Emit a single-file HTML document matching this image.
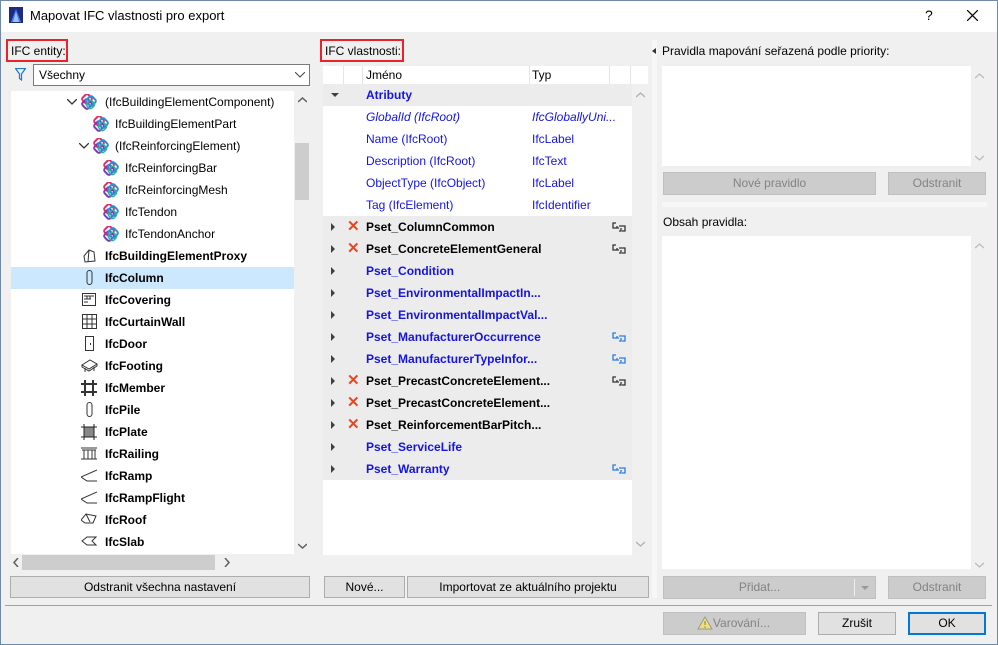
<!DOCTYPE html>
<html><head><meta charset="utf-8">
<style>
*{box-sizing:border-box;margin:0;padding:0}
body{width:998px;height:645px;overflow:hidden;background:#f0f0f0;font-family:"Liberation Sans",sans-serif;font-size:12px;color:#000;position:relative}
.a{position:absolute}
.win{position:absolute;left:0;top:0;width:998px;height:645px;border:1px solid #6f8aa6}
.t{position:absolute;white-space:nowrap;line-height:14px}
.btn{position:absolute;background:#e1e1e1;border:1px solid #adadad;text-align:center;line-height:20px;font-size:12px}
.dis{background:#cccccc;border-color:#bfbfbf;color:#838383}
.b{font-weight:bold}
.blue{color:#1414e6}
.row{position:absolute;left:0;width:100%;height:22px}
.tri{position:absolute;width:0;height:0;border-top:4px solid transparent;border-bottom:4px solid transparent;border-left:4px solid #404040}
.x{position:absolute;color:#e8481d;font-size:15px;font-weight:bold;line-height:14px}
.arr{position:absolute;color:#9a9a9a;font-size:10px}
</style></head><body>
<div class="win"></div>
<!-- title bar -->
<div class="a" style="left:1px;top:1px;width:996px;height:31px;background:#fff"></div>
<svg class="a" style="left:9px;top:7px" width="14" height="16"><rect x="0" y="0" width="14" height="16" fill="#1c2a80"/><path d="M2 15 L7 2 L12 15 Z" fill="#4a7cf0"/><path d="M4 15 L7 5 L10 15Z" fill="#9bc0ff"/></svg>
<div class="t" style="left:30px;top:9px;font-size:13px">Mapovat IFC vlastnosti pro export</div>
<div class="t" style="left:925px;top:8px;font-size:14px">?</div>
<svg class="a" style="left:967px;top:10px" width="11" height="11"><path d="M0 0L11 11M11 0L0 11" stroke="#000" stroke-width="1.2"/></svg>

<!-- LEFT -->
<div class="a" style="left:6px;top:39px;width:62px;height:23px;border:2px solid #e8242a"></div>
<div class="t" style="left:11px;top:44px">IFC entity:</div>
<svg class="a" style="left:15px;top:68px" width="11" height="13"><path d="M0.5 0.5H10.5L6.5 6V12L4.5 10.5V6Z" fill="none" stroke="#1a78d8" stroke-width="1.2"/></svg>
<div class="a" style="left:33px;top:64px;width:277px;height:22px;background:#fff;border:1px solid #7a7a7a"></div>
<div class="t" style="left:39px;top:68px">Všechny</div>
<svg class="a" style="left:295px;top:72px" width="10" height="6"><path d="M0 0L5 5L10 0" fill="none" stroke="#444"/></svg>

<div class="a" style="left:11px;top:91px;width:283px;height:463px;background:#fff;overflow:hidden">
<svg width="0" height="0" style="position:absolute"><defs><g id="ifc"><rect x="3" y="1" width="8" height="8" rx="2" transform="rotate(45 7 5)" fill="none" stroke="#e0306a" stroke-width="2"/><rect x="3" y="6" width="8" height="8" rx="2" transform="rotate(45 7 10)" fill="none" stroke="#7a3bbf" stroke-width="2"/><rect x="7" y="3" width="8" height="8" rx="2" transform="rotate(45 11 7)" fill="none" stroke="#2a8fd8" stroke-width="2"/><rect x="7" y="7" width="7" height="7" rx="2" transform="rotate(45 10.5 10.5)" fill="none" stroke="#30b0a0" stroke-width="1.5"/></g></defs></svg>
<div class="row" style="top:0"><svg class="a" style="left:56px;top:8px" width="10" height="6"><path d="M0 0L5 5L10 0" fill="none" stroke="#333" stroke-width="1.3"/></svg><svg class="a" style="left:69px;top:3px" width="17" height="17"><use href="#ifc"/></svg><span class="t" style="left:94px;top:4px">(IfcBuildingElementComponent)</span></div>
<div class="row" style="top:22px"><svg class="a" style="left:81px;top:3px" width="17" height="17"><use href="#ifc"/></svg><span class="t" style="left:104px;top:4px">IfcBuildingElementPart</span></div>
<div class="row" style="top:44px"><svg class="a" style="left:68px;top:8px" width="10" height="6"><path d="M0 0L5 5L10 0" fill="none" stroke="#333" stroke-width="1.3"/></svg><svg class="a" style="left:81px;top:3px" width="17" height="17"><use href="#ifc"/></svg><span class="t" style="left:104px;top:4px">(IfcReinforcingElement)</span></div>
<div class="row" style="top:66px"><svg class="a" style="left:91px;top:3px" width="17" height="17"><use href="#ifc"/></svg><span class="t" style="left:114px;top:4px">IfcReinforcingBar</span></div>
<div class="row" style="top:88px"><svg class="a" style="left:91px;top:3px" width="17" height="17"><use href="#ifc"/></svg><span class="t" style="left:114px;top:4px">IfcReinforcingMesh</span></div>
<div class="row" style="top:110px"><svg class="a" style="left:91px;top:3px" width="17" height="17"><use href="#ifc"/></svg><span class="t" style="left:114px;top:4px">IfcTendon</span></div>
<div class="row" style="top:132px"><svg class="a" style="left:91px;top:3px" width="17" height="17"><use href="#ifc"/></svg><span class="t" style="left:114px;top:4px">IfcTendonAnchor</span></div>
<div class="row b" style="top:154px"><svg class="a" style="left:72px;top:4px" width="14" height="14"><path d="M2 13L1 7L6 1L11 3L12 12Z M6 1L5 13" fill="none" stroke="#333"/></svg><span class="t" style="left:94px;top:4px">IfcBuildingElementProxy</span></div>
<div class="row b" style="top:176px;background:#cce8ff"><svg class="a" style="left:75px;top:3px" width="8" height="16"><rect x="1" y="0.5" width="5" height="14" rx="2.5" fill="none" stroke="#333"/></svg><span class="t" style="left:94px;top:4px">IfcColumn</span></div>
<div class="row b" style="top:198px"><svg class="a" style="left:71px;top:4px" width="15" height="14"><rect x="0.5" y="0.5" width="13" height="12" fill="none" stroke="#333"/><path d="M2 3H12M2 6H9M2 9H6M5 3V6M8 3V6" stroke="#333"/></svg><span class="t" style="left:94px;top:4px">IfcCovering</span></div>
<div class="row b" style="top:220px"><svg class="a" style="left:71px;top:3px" width="15" height="15"><rect x="0.5" y="0.5" width="14" height="14" fill="none" stroke="#333"/><path d="M5 0V15M10 0V15M0 5H15M0 10H15" stroke="#333"/></svg><span class="t" style="left:94px;top:4px">IfcCurtainWall</span></div>
<div class="row b" style="top:242px"><svg class="a" style="left:74px;top:3px" width="9" height="16"><rect x="0.5" y="0.5" width="8" height="14" fill="none" stroke="#333"/><rect x="5" y="7" width="1" height="2" fill="#333"/></svg><span class="t" style="left:94px;top:4px">IfcDoor</span></div>
<div class="row b" style="top:264px"><svg class="a" style="left:70px;top:4px" width="17" height="14"><path d="M1 6L9 1L16 5L8 10Z M1 6V8L8 12L16 7V5 M4 9V13 M13 8V12" fill="none" stroke="#333"/></svg><span class="t" style="left:94px;top:4px">IfcFooting</span></div>
<div class="row b" style="top:286px"><svg class="a" style="left:70px;top:3px" width="16" height="16"><path d="M4 0V16M12 0V16M0 4H16M0 12H16" stroke="#333" stroke-width="2"/></svg><span class="t" style="left:94px;top:4px">IfcMember</span></div>
<div class="row b" style="top:308px"><svg class="a" style="left:75px;top:3px" width="8" height="16"><rect x="1" y="0.5" width="5" height="14" rx="2.5" fill="none" stroke="#333"/></svg><span class="t" style="left:94px;top:4px">IfcPile</span></div>
<div class="row b" style="top:330px"><svg class="a" style="left:70px;top:3px" width="16" height="16"><rect x="3" y="3" width="10" height="10" fill="#888" stroke="#222"/><path d="M3 0V16M13 0V16M0 3H16M0 13H16" stroke="#222"/></svg><span class="t" style="left:94px;top:4px">IfcPlate</span></div>
<div class="row b" style="top:352px"><svg class="a" style="left:70px;top:4px" width="16" height="13"><path d="M0 1H16M1 3H15M3 3V12M7 3V12M11 3V12M14 3V12M0 12H16" stroke="#333"/></svg><span class="t" style="left:94px;top:4px">IfcRailing</span></div>
<div class="row b" style="top:374px"><svg class="a" style="left:70px;top:4px" width="16" height="13"><path d="M16 1L0 8L6 12H16" fill="none" stroke="#333"/></svg><span class="t" style="left:94px;top:4px">IfcRamp</span></div>
<div class="row b" style="top:396px"><svg class="a" style="left:70px;top:4px" width="16" height="13"><path d="M16 1L0 8L6 12H16" fill="none" stroke="#333"/></svg><span class="t" style="left:94px;top:4px">IfcRampFlight</span></div>
<div class="row b" style="top:418px"><svg class="a" style="left:70px;top:4px" width="16" height="13"><path d="M0 7L5 1L15 3L12 10H4Z M5 1L9 9" fill="none" stroke="#333"/></svg><span class="t" style="left:94px;top:4px">IfcRoof</span></div>
<div class="row b" style="top:440px"><svg class="a" style="left:70px;top:5px" width="16" height="11"><path d="M1 5L6 1H15L11 5L15 9H6Z" fill="none" stroke="#333"/></svg><span class="t" style="left:94px;top:4px">IfcSlab</span></div>
</div>
<!-- left scrollbars -->
<div class="a" style="left:294px;top:91px;width:16px;height:463px;background:#f0f0f0"></div>
<div class="a" style="left:295px;top:143px;width:14px;height:57px;background:#cdcdcd"></div>
<svg class="a" style="left:298px;top:97px" width="9" height="6"><path d="M0 5L4.5 1L9 5" fill="none" stroke="#606060" stroke-width="1.5"/></svg>
<svg class="a" style="left:298px;top:543px" width="9" height="6"><path d="M0 1L4.5 5L9 1" fill="none" stroke="#606060" stroke-width="1.5"/></svg>
<div class="a" style="left:22px;top:555px;width:193px;height:15px;background:#cdcdcd"></div>
<svg class="a" style="left:13px;top:558px" width="6" height="9"><path d="M5 0L1 4.5L5 9" fill="none" stroke="#606060" stroke-width="1.5"/></svg>
<svg class="a" style="left:224px;top:558px" width="6" height="9"><path d="M1 0L5 4.5L1 9" fill="none" stroke="#606060" stroke-width="1.5"/></svg>
<div class="btn" style="left:10px;top:576px;width:236px;height:22px"></div>
<div class="btn" style="left:10px;top:576px;width:300px;height:22px">Odstranit všechna nastavení</div>

<!-- MIDDLE -->
<div class="a" style="left:320px;top:39px;width:84px;height:23px;border:2px solid #e8242a"></div>
<div class="t" style="left:325px;top:44px">IFC vlastnosti:</div>
<div class="a" style="left:323px;top:66px;width:325px;height:489px;background:#fff"></div>
<div class="a" style="left:343px;top:66px;width:1px;height:18px;background:#e5e5e5"></div>
<div class="a" style="left:362px;top:66px;width:1px;height:18px;background:#e5e5e5"></div>
<div class="a" style="left:529px;top:66px;width:1px;height:18px;background:#e5e5e5"></div>
<div class="a" style="left:609px;top:66px;width:1px;height:18px;background:#e5e5e5"></div>
<div class="a" style="left:630px;top:66px;width:1px;height:18px;background:#e5e5e5"></div>
<div class="t" style="left:366px;top:68px">Jméno</div>
<div class="t" style="left:532px;top:68px">Typ</div>
<div class="a" style="left:632px;top:84px;width:16px;height:471px;background:#f0f0f0"></div>
<svg class="a" style="left:636px;top:92px" width="9" height="6"><path d="M0 5L4.5 1L9 5" fill="none" stroke="#b0b0b0" stroke-width="1.3"/></svg>
<svg class="a" style="left:636px;top:541px" width="9" height="6"><path d="M0 1L4.5 5L9 1" fill="none" stroke="#b0b0b0" stroke-width="1.3"/></svg>
<svg class="a" style="left:329px;top:558px" width="6" height="9"><path d="M5 0L1 4.5L5 9" fill="none" stroke="#b0b0b0" stroke-width="1.3"/></svg>
<svg class="a" style="left:479px;top:558px" width="6" height="9"><path d="M1 0L5 4.5L1 9" fill="none" stroke="#b0b0b0" stroke-width="1.3"/></svg>
<div class="a" style="left:323px;top:555px;width:325px;height:15px;background:#f0f0f0"></div>

<div class="a" style="left:323px;top:84px;width:309px;height:22px;background:#ececec"></div>
<div class="a" style="left:331px;top:93px;width:0;height:0;border-left:4px solid transparent;border-right:4px solid transparent;border-top:4px solid #404040"></div>
<div class="t b blue" style="left:366px;top:88px">Atributy</div>
<div class="t blue" style="left:366px;top:110px;font-style:italic">GlobalId (IfcRoot)</div><div class="t blue" style="left:532px;top:110px;font-style:italic">IfcGloballyUni...</div>
<div class="t blue" style="left:366px;top:132px">Name (IfcRoot)</div><div class="t blue" style="left:532px;top:132px">IfcLabel</div>
<div class="t blue" style="left:366px;top:154px">Description (IfcRoot)</div><div class="t blue" style="left:532px;top:154px">IfcText</div>
<div class="t blue" style="left:366px;top:176px">ObjectType (IfcObject)</div><div class="t blue" style="left:532px;top:176px">IfcLabel</div>
<div class="t blue" style="left:366px;top:198px">Tag (IfcElement)</div><div class="t blue" style="left:532px;top:198px">IfcIdentifier</div>

<div class="a" style="left:323px;top:216px;width:309px;height:264px;background:#ececec"></div>
<svg width="0" height="0" style="position:absolute"><defs><g id="lk"><path d="M4 1H1V6H7 M7 4H13V9H10 M5 6V4 M9 6V9H7" fill="none" stroke-width="1.3"/></g></defs></svg>
<!-- pset rows -->
<div class="tri" style="left:331px;top:223px"></div><div class="x" style="left:347px;top:220px">✕</div><div class="t b" style="left:366px;top:220px">Pset_ColumnCommon</div><svg class="a" style="left:612px;top:222px" width="14" height="10" stroke="#333"><use href="#lk"/></svg>
<div class="tri" style="left:331px;top:245px"></div><div class="x" style="left:347px;top:242px">✕</div><div class="t b" style="left:366px;top:242px">Pset_ConcreteElementGeneral</div><svg class="a" style="left:612px;top:244px" width="14" height="10" stroke="#333"><use href="#lk"/></svg>
<div class="tri" style="left:331px;top:267px"></div><div class="t b blue" style="left:366px;top:264px">Pset_Condition</div>
<div class="tri" style="left:331px;top:289px"></div><div class="t b blue" style="left:366px;top:286px">Pset_EnvironmentalImpactIn...</div>
<div class="tri" style="left:331px;top:311px"></div><div class="t b blue" style="left:366px;top:308px">Pset_EnvironmentalImpactVal...</div>
<div class="tri" style="left:331px;top:333px"></div><div class="t b blue" style="left:366px;top:330px">Pset_ManufacturerOccurrence</div><svg class="a" style="left:612px;top:332px" width="14" height="10" stroke="#2a7be0"><use href="#lk"/></svg>
<div class="tri" style="left:331px;top:355px"></div><div class="t b blue" style="left:366px;top:352px">Pset_ManufacturerTypeInfor...</div><svg class="a" style="left:612px;top:354px" width="14" height="10" stroke="#2a7be0"><use href="#lk"/></svg>
<div class="tri" style="left:331px;top:377px"></div><div class="x" style="left:347px;top:374px">✕</div><div class="t b" style="left:366px;top:374px">Pset_PrecastConcreteElement...</div><svg class="a" style="left:612px;top:376px" width="14" height="10" stroke="#333"><use href="#lk"/></svg>
<div class="tri" style="left:331px;top:399px"></div><div class="x" style="left:347px;top:396px">✕</div><div class="t b" style="left:366px;top:396px">Pset_PrecastConcreteElement...</div>
<div class="tri" style="left:331px;top:421px"></div><div class="x" style="left:347px;top:418px">✕</div><div class="t b" style="left:366px;top:418px">Pset_ReinforcementBarPitch...</div>
<div class="tri" style="left:331px;top:443px"></div><div class="t b blue" style="left:366px;top:440px">Pset_ServiceLife</div>
<div class="tri" style="left:331px;top:465px"></div><div class="t b blue" style="left:366px;top:462px">Pset_Warranty</div><svg class="a" style="left:612px;top:464px" width="14" height="10" stroke="#2a7be0"><use href="#lk"/></svg>

<div class="btn" style="left:324px;top:576px;width:81px;height:22px">Nové...</div>
<div class="btn" style="left:407px;top:576px;width:242px;height:22px">Importovat ze aktuálního projektu</div>

<!-- RIGHT -->
<div class="a" style="left:652px;top:40px;width:5px;height:558px;background:#f7f7f7"></div>
<div class="a" style="left:652px;top:48px;width:0;height:0;border-top:3px solid transparent;border-bottom:3px solid transparent;border-right:4px solid #333"></div>
<div class="t" style="left:662px;top:44px">Pravidla mapování seřazená podle priority:</div>
<div class="a" style="left:662px;top:66px;width:309px;height:100px;background:#fff"></div>
<svg class="a" style="left:975px;top:73px" width="9" height="6"><path d="M0 5L4.5 1L9 5" fill="none" stroke="#b8b8b8" stroke-width="1.2"/></svg>
<svg class="a" style="left:975px;top:155px" width="9" height="6"><path d="M0 1L4.5 5L9 1" fill="none" stroke="#b8b8b8" stroke-width="1.2"/></svg>
<div class="btn dis" style="left:663px;top:172px;width:213px;height:23px">Nové pravidlo</div>
<div class="btn dis" style="left:888px;top:172px;width:98px;height:23px">Odstranit</div>
<div class="a" style="left:662px;top:202px;width:325px;height:5px;background:#f7f7f7"></div>
<div class="t" style="left:663px;top:215px">Obsah pravidla:</div>
<div class="a" style="left:662px;top:236px;width:309px;height:333px;background:#fff"></div>
<svg class="a" style="left:975px;top:243px" width="9" height="6"><path d="M0 5L4.5 1L9 5" fill="none" stroke="#b8b8b8" stroke-width="1.2"/></svg>
<svg class="a" style="left:975px;top:562px" width="9" height="6"><path d="M0 1L4.5 5L9 1" fill="none" stroke="#b8b8b8" stroke-width="1.2"/></svg>
<div class="btn dis" style="left:663px;top:576px;width:213px;height:23px;padding-right:20px">Přidat...</div>
<div class="a" style="left:854px;top:579px;width:1px;height:17px;background:#eee"></div>
<div class="a" style="left:861px;top:586px;width:0;height:0;border-left:4px solid transparent;border-right:4px solid transparent;border-top:4px solid #999"></div>
<div class="btn dis" style="left:888px;top:576px;width:98px;height:23px">Odstranit</div>

<!-- footer -->
<div class="a" style="left:5px;top:605px;width:987px;height:1px;background:#a0a0a0"></div>
<div class="btn dis" style="left:663px;top:612px;width:143px;height:23px;padding-left:14px">Varování...</div>
<svg class="a" style="left:697px;top:616px" width="16" height="14"><path d="M8 1L15 13H1Z" fill="#f0e070" stroke="#999"/><path d="M8 5V9M8 10.5V12" stroke="#777"/></svg>
<div class="btn" style="left:818px;top:612px;width:78px;height:23px">Zrušit</div>
<div class="btn" style="left:908px;top:612px;width:78px;height:23px;border:2px solid #0078d7;line-height:19px">OK</div>
</body></html>
